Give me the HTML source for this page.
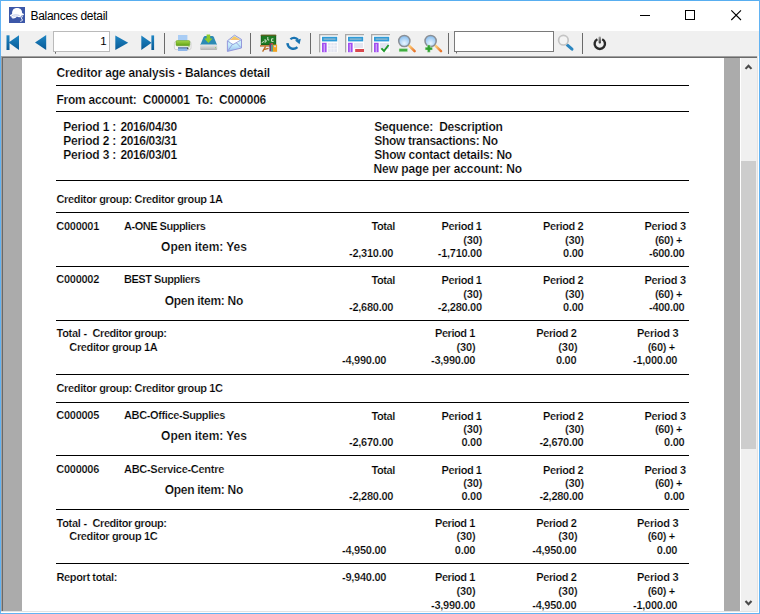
<!DOCTYPE html>
<html><head><meta charset="utf-8"><title>Balances detail</title>
<style>
html,body{margin:0;padding:0;}
body{width:760px;height:614px;overflow:hidden;position:relative;background:#fff;font-family:"Liberation Sans",Arial,sans-serif;}
#title{position:absolute;left:1px;top:1px;width:758px;height:30px;background:#fff;}
#title .cap{position:absolute;left:29.5px;top:8px;font:12px/15px "Liberation Sans",Arial,sans-serif;color:#000;white-space:pre;letter-spacing:-0.3px;}
#tb{position:absolute;left:1px;top:31px;width:758px;height:25px;background:#f0f0f0;}
.sep{position:absolute;top:33px;width:1px;height:21px;background:#6d6d6d;}
.abs{position:absolute;}
#view{position:absolute;left:1px;top:56px;width:756px;height:555px;background:#ababab;}
#page{position:absolute;left:22px;top:58px;width:702px;height:553px;background:#fff;}
.t{position:absolute;white-space:pre;color:#000;font-weight:bold;line-height:14px;-webkit-text-stroke:0.2px #fff;}
.a{font-size:12px;}
.b{font-size:11px;}
.hl{position:absolute;left:56px;width:633px;height:1px;background:#000;}
svg{position:absolute;overflow:visible;}
</style></head><body>
<div id="title">
 <svg style="left:8px;top:6px" width="16" height="16" viewBox="0 0 16 16">
  <rect width="16" height="16" fill="#3c57a8"/>
  <path d="M3.1 6.9 C2.9 3 4.6 0.9 8.1 0.9 C11.6 0.9 13.2 3 13.1 6.2 C14.2 6.2 15 6.8 14.9 7.6 C14.8 8.4 13.6 8.7 12.6 8.6 C12.2 9.6 11.4 10.2 10.2 10.2 C9.2 10.2 8.6 9.8 8 9.6 C7 11 5.2 11.8 3.6 11.4 C2.4 11.1 2.2 10.2 3 9.6 C1.4 9.8 0.6 8.8 1.2 8 C1.7 7.3 2.5 7.2 3.1 6.9 Z" fill="#fff"/>
  <path d="M2.6 8.9 C4.6 7.6 8.2 7.5 10.6 8.6" stroke="#a9b7e0" stroke-width="0.8" fill="none"/>
  <path d="M3.4 10.4 C5 9.2 7 9 8.4 9.4" stroke="#c3cdea" stroke-width="0.7" fill="none"/>
  <path d="M13.9 9.7 C12.6 9.5 11.9 10.2 12.2 11 C12.5 11.8 13.4 11.9 13.3 12.9 C13.2 13.9 12.2 14.5 11.3 14.3" stroke="#fff" stroke-width="1" fill="none"/>
 </svg>
 <span class="cap">Balances detail</span>
 <svg style="left:639px;top:14px" width="11" height="2"><rect x="0" y="0" width="10" height="1" fill="#000"/></svg>
 <svg style="left:684px;top:9px" width="11" height="11"><rect x="0.5" y="0.5" width="9" height="9" fill="none" stroke="#000" stroke-width="1"/></svg>
 <svg style="left:730px;top:9px" width="11" height="11"><path d="M0.3 0.3 L10 10 M10 0.3 L0.3 10" stroke="#000" stroke-width="1.1" fill="none"/></svg>
</div>
<div id="tb"></div>
<svg style="left:0;top:31px" width="760" height="25" viewBox="0 31 760 25">
 <defs>
  <linearGradient id="gb" x1="0" y1="0" x2="0" y2="1"><stop offset="0" stop-color="#1f86c4"/><stop offset="1" stop-color="#085a96"/></linearGradient>
  <linearGradient id="gg" x1="0" y1="0" x2="0" y2="1"><stop offset="0" stop-color="#a6d84a"/><stop offset="1" stop-color="#5c9e12"/></linearGradient>
  <linearGradient id="gs" x1="0" y1="0" x2="0" y2="1"><stop offset="0" stop-color="#ececec"/><stop offset="1" stop-color="#b2b2b2"/></linearGradient>
  <radialGradient id="gl" cx="0.5" cy="0.7" r="0.7"><stop offset="0" stop-color="#eaf6ff"/><stop offset="1" stop-color="#7fb9ee"/></radialGradient>
  <linearGradient id="go" x1="0" y1="0" x2="1" y2="1"><stop offset="0" stop-color="#ffd27a"/><stop offset="1" stop-color="#e8742a"/></linearGradient>
 <linearGradient id="gp" x1="0" y1="0" x2="0" y2="1"><stop offset="0" stop-color="#a8a8a8"/><stop offset="1" stop-color="#333"/></linearGradient>
 <linearGradient id="ge" x1="0" y1="0" x2="0" y2="1"><stop offset="0" stop-color="#d6f1fc"/><stop offset="0.6" stop-color="#c6ecfb"/><stop offset="1" stop-color="#98bff0"/></linearGradient>
  <linearGradient id="gy" x1="0" y1="0" x2="0" y2="1"><stop offset="0" stop-color="#f6d24a"/><stop offset="0.45" stop-color="#f6c07a"/><stop offset="0.55" stop-color="#ffffff"/><stop offset="1" stop-color="#ffffff"/></linearGradient>
 </defs>
 <!-- nav first -->
 <g fill="url(#gb)">
  <rect x="6.5" y="35.3" width="3" height="14.7"/>
  <path d="M19 35.3 L19 50 L8.6 42.6 Z"/>
  <path d="M46.2 35 L46.2 50 L35 42.5 Z"/>
  <path d="M115.3 35.4 L115.3 50 L128.2 42.7 Z"/>
  <path d="M141.3 35.4 L141.3 50 L151.6 42.7 Z"/>
  <rect x="151.4" y="35.4" width="2.7" height="14.6"/>
 </g>
 <!-- page input -->
 <rect x="53.5" y="31.5" width="56" height="20" fill="#fff" stroke="#bababa" stroke-width="1"/>
 <rect x="55" y="52" width="1" height="1.7" fill="#666"/>
 <text x="100.2" y="45" font-family="'Liberation Sans',Arial,sans-serif" font-size="11.5" fill="#000">1</text>
 <!-- separators -->
 <g fill="#6a6a6a">
  <rect x="164" y="33" width="1" height="21"/>
  <rect x="250" y="33" width="1" height="21"/>
  <rect x="310" y="33" width="1" height="21"/>
  <rect x="448" y="33" width="1" height="21"/>
  <rect x="582" y="33" width="1" height="21"/>
 </g>
 <!-- printer -->
 <g>
  <rect x="178" y="35" width="9.4" height="7" fill="#a9cdf5"/>
  <rect x="174.4" y="41.6" width="16.6" height="8" rx="1.6" fill="#f6f6f6" stroke="#c4c4c4" stroke-width="0.7"/>
  <rect x="176" y="40.6" width="13.8" height="5.2" rx="1" fill="url(#gg)" stroke="#5d9a1c" stroke-width="0.5"/>
  <rect x="178" y="47.8" width="9.4" height="3.2" fill="#8db6ea"/>
  <rect x="178" y="47.3" width="9.8" height="1.1" fill="#4b6a96"/>
  <rect x="187.2" y="47.6" width="1.2" height="1.6" fill="#333"/>
  <rect x="188.4" y="46.4" width="1.4" height="0.8" fill="#8dc63f"/>
 </g>
 <!-- download -->
 <g>
  <path d="M200.3 45 L203.5 37.2 Q204 36 205.2 36 L212.2 36 Q213.4 36 213.9 37.2 L217.1 45 Z" fill="#2b8ab5"/>
  <rect x="200.2" y="44.4" width="17" height="5.6" rx="1" fill="url(#gs)"/>
  <rect x="215" y="47.2" width="1" height="1" fill="#8fd06a"/>
  <path d="M206.6 34.6 L210.2 34.6 L210.2 38.5 L212.6 38.5 L208.4 43 L204.2 38.5 L206.6 38.5 Z" fill="#8dcb2c"/>
 </g>
 <!-- envelope -->
 <g>
  <path d="M227.4 40.8 L234.5 35.2 L241.5 39.4 L241.5 48 L227.4 51.4 Z" fill="url(#ge)" stroke="#8d8fd8" stroke-width="0.9" stroke-linejoin="round"/>
  <path d="M229.6 40 L234.4 36.2 L239.8 39.2 L238.6 42.6 L233 43.8 L230 42.6 Z" fill="url(#gy)"/>
  <path d="M227.8 41.2 L233 44.6 L241.2 39.8 M228 50.8 L232.4 44.4 M241 47.6 L236.4 42.8" stroke="#8b90d6" stroke-width="0.8" fill="none"/>
 </g>
 <!-- blackboard -->
 <g>
  <rect x="260.8" y="34.8" width="15.4" height="10.2" rx="0.6" fill="#14601a"/>
  <rect x="260.8" y="34.8" width="15.4" height="0.9" fill="#8a5a22"/>
  <rect x="261.6" y="35.8" width="13.8" height="8.4" fill="#1d7a24"/>
  <path d="M261.6 42.8 L264 41.4 M264.2 40 L266 40 L266 42 L264.4 42 M267.8 37 L267.8 40 L269.2 40 M273.4 38.8 L271.6 38.8 L271.6 41.4 L273.6 41.4" stroke="#e6f2e2" stroke-width="0.9" fill="none"/>
  <rect x="260" y="45.2" width="10.4" height="1.4" fill="#b9691f"/>
  <path d="M265.6 46.4 L262.6 51.6 M263.6 49.6 L268.6 48.4" stroke="#b9691f" stroke-width="1.3" fill="none"/>
  <rect x="269.4" y="43.2" width="2" height="8.2" fill="#7a3566"/>
  <rect x="271.2" y="43" width="1.8" height="8.6" fill="#3b9a94"/>
  <rect x="271.2" y="43" width="1.8" height="1.6" fill="#c8423a"/>
  <rect x="272.8" y="44.6" width="4.3" height="7.2" fill="#f0a21e"/>
  <rect x="274" y="45.6" width="2" height="1.6" fill="#cfd8ea"/>
 </g>
 <!-- refresh -->
 <g fill="none" stroke="#1873b2">
  <path d="M290.4 39.2 A5.2 5.2 0 0 1 298 39.8" stroke-width="2.2"/>
  <path d="M287.4 43.2 A6 6 0 0 0 297.4 47.2" stroke-width="2.4"/>
 </g>
 <path d="M295 40.6 L300.8 38.8 L299.6 44.2 Z" fill="#1873b2"/>
 <!-- report icons -->
 <g id="rp1">
  <rect x="319" y="34" width="19" height="18.4" fill="#fdfdfd"/>
  <rect x="319" y="34" width="19" height="1.3" fill="#a8a8a8"/>
  <rect x="319" y="34" width="1.3" height="18.4" fill="#a8a8a8"/>
  <rect x="322" y="36.8" width="15.2" height="4.6" fill="#2f9bd8"/>
  <rect x="323.6" y="38.4" width="12" height="1.4" fill="#8fb9cf"/>
  <rect x="322" y="42.8" width="4.6" height="9.4" fill="#a24df0"/>
  <rect x="323.6" y="44" width="1.4" height="8" fill="#c9a2f7"/>
  <rect x="328" y="43" width="9" height="9" fill="#e3e5f0"/>
  <path d="M328 45.8 H337 M328 48.8 H337 M331 43 V52 M334 43 V52" stroke="#f6f7fb" stroke-width="0.8"/>
 </g>
 <g>
  <rect x="345" y="34" width="19" height="18.4" fill="#fdfdfd"/>
  <rect x="345" y="34" width="19" height="1.3" fill="#a8a8a8"/>
  <rect x="345" y="34" width="1.3" height="18.4" fill="#a8a8a8"/>
  <rect x="348" y="36.8" width="15.2" height="4.6" fill="#2f9bd8"/>
  <rect x="349.6" y="38.4" width="12" height="1.4" fill="#8fb9cf"/>
  <rect x="348" y="42.8" width="4.6" height="9.4" fill="#a24df0"/>
  <rect x="349.6" y="44" width="1.4" height="8" fill="#c9a2f7"/>
  <rect x="354" y="43" width="9" height="5" fill="#e3e5f0"/>
  <rect x="355.2" y="49" width="8.8" height="3" fill="#d9484e"/>
 </g>
 <g>
  <rect x="371" y="34" width="19" height="18.4" fill="#fdfdfd"/>
  <rect x="371" y="34" width="19" height="1.3" fill="#a8a8a8"/>
  <rect x="371" y="34" width="1.3" height="18.4" fill="#a8a8a8"/>
  <rect x="374" y="36.8" width="15.2" height="4.6" fill="#2f9bd8"/>
  <rect x="375.6" y="38.4" width="12" height="1.4" fill="#8fb9cf"/>
  <rect x="374" y="42.8" width="4.6" height="9.4" fill="#a24df0"/>
  <rect x="375.6" y="44" width="1.4" height="8" fill="#c9a2f7"/>
  <rect x="380" y="43" width="9" height="6" fill="#e3e5f0"/>
  <path d="M381.4 48.4 L384 51 L388.6 45" stroke="#1f9a2c" stroke-width="1.9" fill="none"/>
 </g>
 <!-- zoom out -->
 <g>
  <path d="M409 45.6 L414.6 51.2" stroke="url(#go)" stroke-width="2.6" stroke-linecap="round"/>
  <circle cx="404.3" cy="41" r="5.6" fill="url(#gl)" stroke="#8a8f96" stroke-width="1.5"/>
  <rect x="399" y="48.6" width="8.6" height="3.2" rx="0.6" fill="#3fae3f" stroke="#d9f0d9" stroke-width="0.5"/>
 </g>
 <!-- zoom in -->
 <g>
  <path d="M435.4 45.6 L441 51.2" stroke="url(#go)" stroke-width="2.6" stroke-linecap="round"/>
  <circle cx="430.6" cy="41" r="5.6" fill="url(#gl)" stroke="#8a8f96" stroke-width="1.5"/>
  <path d="M427.4 45 H430.2 V47.2 H432.4 V50 H430.2 V52.2 H427.4 V50 H425.2 V47.2 H427.4 Z" fill="#2fa12f" stroke="#d9f0d9" stroke-width="0.4"/>
 </g>
 <!-- search input -->
 <rect x="454.5" y="31.5" width="99" height="20" fill="#fff" stroke="#7a7a7a" stroke-width="1"/>
 <rect x="456" y="52" width="1" height="1.4" fill="#666"/>
 <!-- search icon -->
 <g>
  <path d="M567.4 45.2 L572 49.2" stroke="#2b86c0" stroke-width="3" stroke-linecap="round"/>
  <circle cx="563.4" cy="40.2" r="4.8" fill="#f4f4f4" stroke="#c4c4c4" stroke-width="1.7"/>
 </g>
 <!-- power -->
 <g>
  <path d="M597.4 39.2 A5.2 5.2 0 1 0 602.2 39.2" fill="none" stroke="#2b2b2b" stroke-width="2.4"/>
  <rect x="598.6" y="36.4" width="2.4" height="7.2" rx="1" fill="url(#gp)"/>
 </g>
</svg>

<div class="abs" style="left:1px;top:56px;width:756px;height:1px;background:#a0a0a0"></div>
<div class="abs" style="left:1px;top:56px;width:1px;height:556px;background:#a0a0a0"></div>
<div class="abs" style="left:2px;top:57px;width:755px;height:1px;background:#696969"></div>
<div class="abs" style="left:2px;top:57px;width:1px;height:554px;background:#696969"></div>
<div class="abs" style="left:3px;top:58px;width:19px;height:553px;background:#ababab"></div>
<div class="abs" style="left:724px;top:58px;width:16px;height:553px;background:#ababab"></div>
<div class="abs" style="left:740px;top:58px;width:1px;height:553px;background:#fff"></div>
<div class="abs" style="left:741px;top:58px;width:16px;height:553px;background:#f0f0f0"></div>
<div class="abs" style="left:741px;top:161px;width:15px;height:288px;background:#cdcdcd"></div>
<svg style="left:744px;top:63px" width="10" height="8"><path d="M1.5 5.9 L4.5 2.7 L7.5 5.9" stroke="#4a4a4a" stroke-width="2.1" fill="none"/></svg>
<svg style="left:744px;top:599px" width="10" height="8"><path d="M1.5 2 L4.5 5.2 L7.5 2" stroke="#4a4a4a" stroke-width="2.1" fill="none"/></svg>
<div class="abs" style="left:757px;top:56px;width:1px;height:556px;background:#e3e3e3"></div>
<div class="abs" style="left:758px;top:56px;width:1px;height:557px;background:#fff"></div>
<div class="abs" style="left:1px;top:611px;width:757px;height:1px;background:#e3e3e3"></div>
<div class="abs" style="left:1px;top:612px;width:758px;height:1px;background:#fff"></div>
<div id="rep">
<span class="t a" style="left:56.50px;top:66px;letter-spacing:-0.152px;">Creditor age analysis - Balances detail</span>
<span class="t a" style="left:56.50px;top:93px;letter-spacing:-0.251px;">From account:  C000001  To:  C000006</span>
<span class="t a" style="left:63.20px;top:120px;letter-spacing:-0.169px;">Period 1 :</span>
<span class="t a" style="left:120.50px;top:120px;letter-spacing:-0.386px;">2016/04/30</span>
<span class="t a" style="left:63.20px;top:134px;letter-spacing:-0.169px;">Period 2 :</span>
<span class="t a" style="left:120.50px;top:134px;letter-spacing:-0.386px;">2016/03/31</span>
<span class="t a" style="left:63.20px;top:148px;letter-spacing:-0.169px;">Period 3 :</span>
<span class="t a" style="left:120.50px;top:148px;letter-spacing:-0.386px;">2016/03/01</span>
<span class="t a" style="left:374.30px;top:120px;letter-spacing:-0.226px;">Sequence:  Description</span>
<span class="t a" style="left:374.30px;top:134px;letter-spacing:-0.315px;">Show transactions: No</span>
<span class="t a" style="left:374.30px;top:148px;letter-spacing:-0.208px;">Show contact details: No</span>
<span class="t a" style="left:373.50px;top:162px;letter-spacing:-0.092px;">New page per account: No</span>
<span class="t b" style="left:56.50px;top:192px;letter-spacing:-0.352px;">Creditor group: Creditor group 1A</span>
<span class="t b" style="left:56.30px;top:219px;letter-spacing:-0.279px;">C000001</span>
<span class="t b" style="left:124.00px;top:219px;letter-spacing:-0.488px;">A-ONE Suppliers</span>
<span class="t a" style="left:161.12px;top:240px;letter-spacing:-0.056px;">Open item: Yes</span>
<span class="t b" style="left:371.41px;top:219px;letter-spacing:-0.394px;">Total</span>
<span class="t b" style="left:349.08px;top:246px;letter-spacing:-0.270px;">-2,310.00</span>
<span class="t b" style="left:441.57px;top:219px;letter-spacing:-0.426px;">Period 1</span>
<span class="t b" style="left:463.21px;top:233px;letter-spacing:-0.091px;">(30)</span>
<span class="t b" style="left:543.01px;top:219px;letter-spacing:-0.388px;">Period 2</span>
<span class="t b" style="left:564.91px;top:233px;letter-spacing:-0.091px;">(30)</span>
<span class="t b" style="left:644.44px;top:219px;letter-spacing:-0.263px;">Period 3</span>
<span class="t b" style="left:654.98px;top:233px;letter-spacing:-0.324px;">(60) +</span>
<span class="t b" style="left:437.78px;top:246px;letter-spacing:-0.270px;">-1,710.00</span>
<span class="t b" style="left:563.09px;top:246px;letter-spacing:-0.270px;">0.00</span>
<span class="t b" style="left:649.01px;top:246px;letter-spacing:-0.270px;">-600.00</span>
<span class="t b" style="left:56.30px;top:272px;letter-spacing:-0.279px;">C000002</span>
<span class="t b" style="left:124.00px;top:272px;letter-spacing:-0.467px;">BEST Suppliers</span>
<span class="t a" style="left:164.71px;top:294px;letter-spacing:-0.286px;">Open item: No</span>
<span class="t b" style="left:371.41px;top:273px;letter-spacing:-0.394px;">Total</span>
<span class="t b" style="left:349.08px;top:300px;letter-spacing:-0.270px;">-2,680.00</span>
<span class="t b" style="left:441.57px;top:273px;letter-spacing:-0.426px;">Period 1</span>
<span class="t b" style="left:463.21px;top:287px;letter-spacing:-0.091px;">(30)</span>
<span class="t b" style="left:543.01px;top:273px;letter-spacing:-0.388px;">Period 2</span>
<span class="t b" style="left:564.91px;top:287px;letter-spacing:-0.091px;">(30)</span>
<span class="t b" style="left:644.44px;top:273px;letter-spacing:-0.263px;">Period 3</span>
<span class="t b" style="left:654.98px;top:287px;letter-spacing:-0.324px;">(60) +</span>
<span class="t b" style="left:437.78px;top:300px;letter-spacing:-0.270px;">-2,280.00</span>
<span class="t b" style="left:563.09px;top:300px;letter-spacing:-0.270px;">0.00</span>
<span class="t b" style="left:649.01px;top:300px;letter-spacing:-0.270px;">-400.00</span>
<span class="t b" style="left:56.50px;top:326px;letter-spacing:-0.270px;">Total -</span>
<span class="t b" style="left:92.60px;top:326px;letter-spacing:-0.458px;">Creditor group:</span>
<span class="t b" style="left:69.30px;top:340px;letter-spacing:-0.360px;">Creditor group 1A</span>
<span class="t b" style="left:342.08px;top:353px;letter-spacing:-0.270px;">-4,990.00</span>
<span class="t b" style="left:434.97px;top:326px;letter-spacing:-0.426px;">Period 1</span>
<span class="t b" style="left:456.41px;top:340px;letter-spacing:-0.091px;">(30)</span>
<span class="t b" style="left:536.31px;top:326px;letter-spacing:-0.388px;">Period 2</span>
<span class="t b" style="left:558.31px;top:340px;letter-spacing:-0.091px;">(30)</span>
<span class="t b" style="left:637.04px;top:326px;letter-spacing:-0.263px;">Period 3</span>
<span class="t b" style="left:647.78px;top:340px;letter-spacing:-0.324px;">(60) +</span>
<span class="t b" style="left:431.08px;top:353px;letter-spacing:-0.270px;">-3,990.00</span>
<span class="t b" style="left:555.99px;top:353px;letter-spacing:-0.270px;">0.00</span>
<span class="t b" style="left:633.08px;top:353px;letter-spacing:-0.270px;">-1,000.00</span>
<span class="t b" style="left:56.50px;top:381px;letter-spacing:-0.352px;">Creditor group: Creditor group 1C</span>
<span class="t b" style="left:56.30px;top:408px;letter-spacing:-0.279px;">C000005</span>
<span class="t b" style="left:124.00px;top:408px;letter-spacing:-0.378px;">ABC-Office-Supplies</span>
<span class="t a" style="left:161.12px;top:429px;letter-spacing:-0.056px;">Open item: Yes</span>
<span class="t b" style="left:371.41px;top:409px;letter-spacing:-0.394px;">Total</span>
<span class="t b" style="left:349.08px;top:435px;letter-spacing:-0.270px;">-2,670.00</span>
<span class="t b" style="left:441.57px;top:409px;letter-spacing:-0.426px;">Period 1</span>
<span class="t b" style="left:463.21px;top:422px;letter-spacing:-0.091px;">(30)</span>
<span class="t b" style="left:543.01px;top:409px;letter-spacing:-0.388px;">Period 2</span>
<span class="t b" style="left:564.91px;top:422px;letter-spacing:-0.091px;">(30)</span>
<span class="t b" style="left:644.44px;top:409px;letter-spacing:-0.263px;">Period 3</span>
<span class="t b" style="left:654.98px;top:422px;letter-spacing:-0.324px;">(60) +</span>
<span class="t b" style="left:461.49px;top:435px;letter-spacing:-0.270px;">0.00</span>
<span class="t b" style="left:539.38px;top:435px;letter-spacing:-0.270px;">-2,670.00</span>
<span class="t b" style="left:664.09px;top:435px;letter-spacing:-0.270px;">0.00</span>
<span class="t b" style="left:56.30px;top:462px;letter-spacing:-0.279px;">C000006</span>
<span class="t b" style="left:124.00px;top:462px;letter-spacing:-0.286px;">ABC-Service-Centre</span>
<span class="t a" style="left:164.71px;top:483px;letter-spacing:-0.286px;">Open item: No</span>
<span class="t b" style="left:371.41px;top:463px;letter-spacing:-0.394px;">Total</span>
<span class="t b" style="left:349.08px;top:489px;letter-spacing:-0.270px;">-2,280.00</span>
<span class="t b" style="left:441.57px;top:463px;letter-spacing:-0.426px;">Period 1</span>
<span class="t b" style="left:463.21px;top:476px;letter-spacing:-0.091px;">(30)</span>
<span class="t b" style="left:543.01px;top:463px;letter-spacing:-0.388px;">Period 2</span>
<span class="t b" style="left:564.91px;top:476px;letter-spacing:-0.091px;">(30)</span>
<span class="t b" style="left:644.44px;top:463px;letter-spacing:-0.263px;">Period 3</span>
<span class="t b" style="left:654.98px;top:476px;letter-spacing:-0.324px;">(60) +</span>
<span class="t b" style="left:461.49px;top:489px;letter-spacing:-0.270px;">0.00</span>
<span class="t b" style="left:539.38px;top:489px;letter-spacing:-0.270px;">-2,280.00</span>
<span class="t b" style="left:664.09px;top:489px;letter-spacing:-0.270px;">0.00</span>
<span class="t b" style="left:56.50px;top:516px;letter-spacing:-0.270px;">Total -</span>
<span class="t b" style="left:92.60px;top:516px;letter-spacing:-0.458px;">Creditor group:</span>
<span class="t b" style="left:69.30px;top:529px;letter-spacing:-0.360px;">Creditor group 1C</span>
<span class="t b" style="left:342.08px;top:543px;letter-spacing:-0.270px;">-4,950.00</span>
<span class="t b" style="left:434.97px;top:516px;letter-spacing:-0.426px;">Period 1</span>
<span class="t b" style="left:456.41px;top:529px;letter-spacing:-0.091px;">(30)</span>
<span class="t b" style="left:536.31px;top:516px;letter-spacing:-0.388px;">Period 2</span>
<span class="t b" style="left:558.31px;top:529px;letter-spacing:-0.091px;">(30)</span>
<span class="t b" style="left:637.04px;top:516px;letter-spacing:-0.263px;">Period 3</span>
<span class="t b" style="left:647.78px;top:529px;letter-spacing:-0.324px;">(60) +</span>
<span class="t b" style="left:454.79px;top:543px;letter-spacing:-0.270px;">0.00</span>
<span class="t b" style="left:532.28px;top:543px;letter-spacing:-0.270px;">-4,950.00</span>
<span class="t b" style="left:656.79px;top:543px;letter-spacing:-0.270px;">0.00</span>
<span class="t b" style="left:56.50px;top:570px;letter-spacing:-0.376px;">Report total:</span>
<span class="t b" style="left:342.08px;top:570px;letter-spacing:-0.270px;">-9,940.00</span>
<span class="t b" style="left:434.97px;top:570px;letter-spacing:-0.426px;">Period 1</span>
<span class="t b" style="left:456.41px;top:584px;letter-spacing:-0.091px;">(30)</span>
<span class="t b" style="left:536.31px;top:570px;letter-spacing:-0.388px;">Period 2</span>
<span class="t b" style="left:558.31px;top:584px;letter-spacing:-0.091px;">(30)</span>
<span class="t b" style="left:637.04px;top:570px;letter-spacing:-0.263px;">Period 3</span>
<span class="t b" style="left:647.78px;top:584px;letter-spacing:-0.324px;">(60) +</span>
<span class="t b" style="left:431.08px;top:598px;letter-spacing:-0.270px;">-3,990.00</span>
<span class="t b" style="left:532.28px;top:598px;letter-spacing:-0.270px;">-4,950.00</span>
<span class="t b" style="left:633.08px;top:598px;letter-spacing:-0.270px;">-1,000.00</span>
<div class="hl" style="top:85px"></div>
<div class="hl" style="top:111px"></div>
<div class="hl" style="top:180px"></div>
<div class="hl" style="top:212px"></div>
<div class="hl" style="top:266px"></div>
<div class="hl" style="top:320px"></div>
<div class="hl" style="top:374px"></div>
<div class="hl" style="top:402px"></div>
<div class="hl" style="top:455px"></div>
<div class="hl" style="top:509px"></div>
<div class="hl" style="top:563px"></div>
</div>
<div class="abs" style="left:0;top:0;width:760px;height:1px;background:#58aef0"></div>
<div class="abs" style="left:0;top:0;width:1px;height:614px;background:#62b3f3"></div>
<div class="abs" style="left:759px;top:0;width:1px;height:614px;background:#62b3f3"></div>
<div class="abs" style="left:0;top:613px;width:760px;height:1px;background:#62b3f3"></div>
</body></html>
